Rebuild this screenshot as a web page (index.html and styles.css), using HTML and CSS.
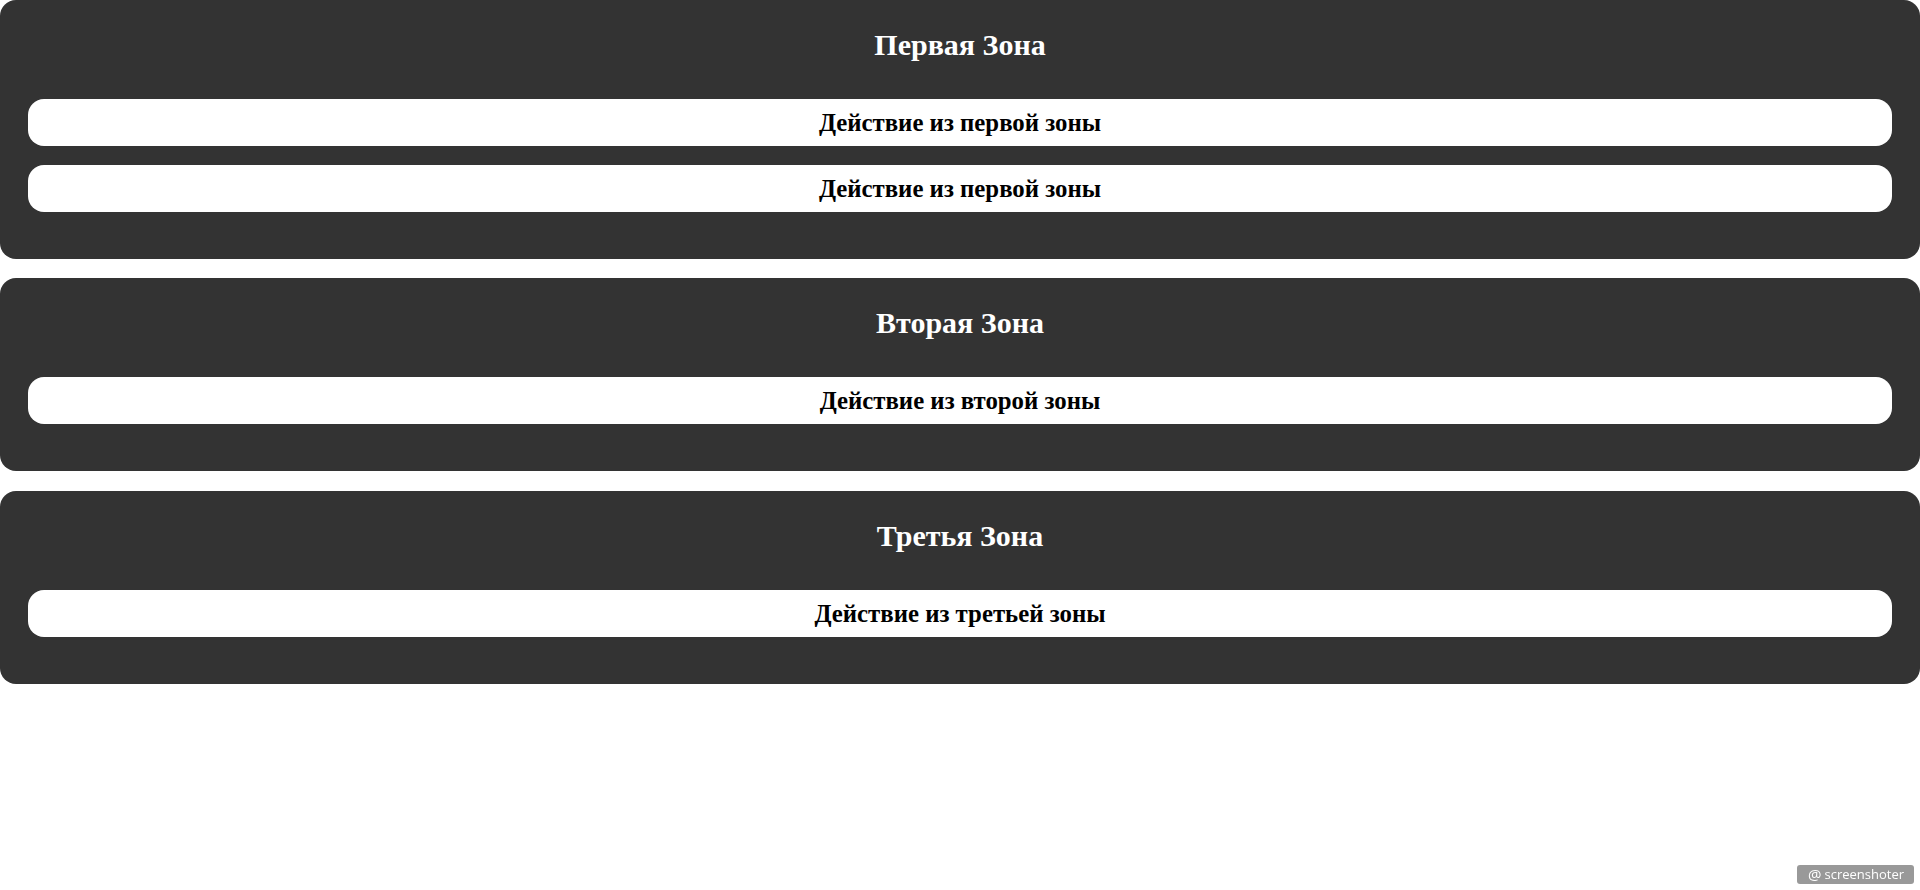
FILE: index.html
```html
<!DOCTYPE html>
<html lang="ru">
<head>
<meta charset="utf-8">
<title>Зоны</title>
<link rel="stylesheet" href="styles.css">
</head>
<body>
<main class="zones">
  <section class="zone">
    <h2 class="zone-title">Первая Зона</h2>
    <div class="actions">
      <button class="action">Действие из первой зоны</button>
      <button class="action">Действие из первой зоны</button>
    </div>
  </section>
  <section class="zone">
    <h2 class="zone-title">Вторая Зона</h2>
    <div class="actions">
      <button class="action">Действие из второй зоны</button>
    </div>
  </section>
  <section class="zone">
    <h2 class="zone-title">Третья Зона</h2>
    <div class="actions">
      <button class="action">Действие из третьей зоны</button>
    </div>
  </section>
</main>
<div class="watermark"><span class="wm-at">@</span>screenshoter</div>
</body>
</html>
```
FILE: styles.css
```css
html, body {
  margin: 0;
  padding: 0;
  background: #ffffff;
}
body {
  font-family: "Liberation Serif", "Times New Roman", serif;
}
.zones {
  display: flex;
  flex-direction: column;
  gap: 19.3px;
}
.zone {
  background: #333333;
  border-radius: 16px;
  padding: 28px 28px 47px;
}
.zone-title {
  margin: 0 0 37px;
  font-size: 30px;
  line-height: 34px;
  font-weight: bold;
  color: #ffffff;
  text-align: center;
}
.actions {
  display: flex;
  flex-direction: column;
  gap: 19px;
}
.action {
  display: block;
  width: 100%;
  border: none;
  outline: none;
  background: #ffffff;
  color: #000000;
  border-radius: 16px;
  padding: 10px 0;
  font-family: "Liberation Serif", "Times New Roman", serif;
  font-size: 24.8px;
  font-weight: bold;
  line-height: 27px;
  text-align: center;
}
.watermark {
  position: fixed;
  right: 6px;
  bottom: 6px;
  height: 19px;
  padding: 0 10px 0 11px;
  display: flex;
  align-items: center;
  gap: 3px;
  background: #999999;
  color: #ffffff;
  border-radius: 3px;
  font-family: "Open Sans", sans-serif;
  font-size: 13px;
  line-height: 19px;
}
.wm-at {
  font-size: 15px;
}
```
